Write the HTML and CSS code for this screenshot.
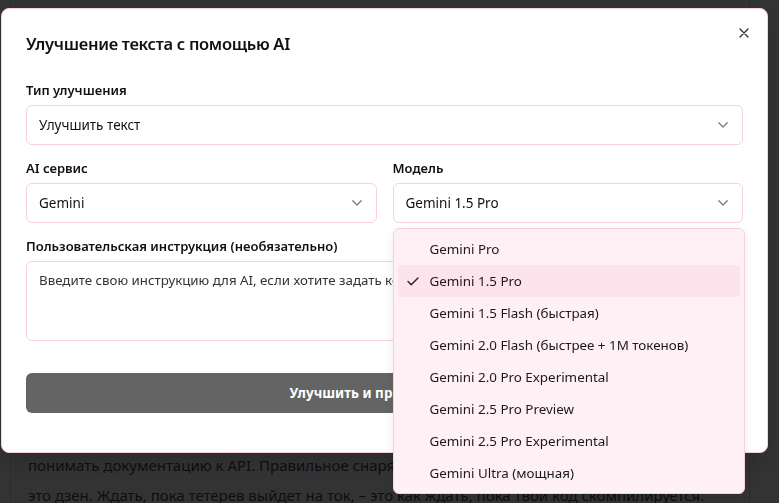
FILE: index.html
```html
<!DOCTYPE html>
<html lang="ru">
<head>
<meta charset="utf-8">
<title>Улучшение текста с помощью AI</title>
<link rel="stylesheet" href="styles.css">
</head>
<body>
<main class="page">
  <article class="article">
    <p class="text">
      Охота на тетерева – это не просто выход в лес с ружьём.<br>
      Это целое искусство, которое требует терпения,<br>
      внимательности и знания повадок птицы. Опытный<br>
      охотник знает, где искать токовище, как подойти<br>
      к нему незамеченным и когда лучше затаиться.<br>
      Точно так же и в программировании: нужно знать,<br>
      где искать ошибку, как подойти к задаче и когда<br>
      лучше сделать паузу. Хорошая охота начинается<br>
      с подготовки, и хороший код – тоже. Нужно изучить<br>
      местность так же внимательно, как программист<br>
      изучает архитектуру проекта, и знать повадки<br>
      птицы так же хорошо, как разработчик должен<br>
      знать свои инструменты и уметь читать и<br>
      понимать документацию к API. Правильное снаряжение – половина успеха.<br>
      это дзен. Ждать, пока тетерев выйдет на ток, – это как ждать, пока твой код скомпилируется.
    </p>
  </article>
</main>

<div class="overlay"></div>

<section class="modal" role="dialog" aria-labelledby="modal-title">
  <header class="modal-header">
    <h2 class="modal-title" id="modal-title">Улучшение текста с помощью AI</h2>
  </header>
  <button class="close" type="button" aria-label="Закрыть">
    <svg width="10" height="10" viewBox="0 0 10 10"><path d="M1 1L9 9M9 1L1 9" stroke="#333" stroke-width="1.4" stroke-linecap="round" fill="none"/></svg>
  </button>

  <div class="form">
    <div class="field">
      <div class="label">Тип улучшения</div>
      <div class="select">
        <span>Улучшить текст</span>
        <svg class="chev" width="10" height="6" viewBox="0 0 10 6"><path d="M0.8 0.8L5 5L9.2 0.8" stroke="#7a7a7a" stroke-width="1.3" fill="none" stroke-linecap="round" stroke-linejoin="round"/></svg>
      </div>
    </div>

    <div class="row">
      <div class="field">
        <div class="label">AI сервис</div>
        <div class="select">
          <span>Gemini</span>
          <svg class="chev" width="10" height="6" viewBox="0 0 10 6"><path d="M0.8 0.8L5 5L9.2 0.8" stroke="#7a7a7a" stroke-width="1.3" fill="none" stroke-linecap="round" stroke-linejoin="round"/></svg>
        </div>
      </div>
      <div class="field model">
        <div class="label">Модель</div>
        <div class="select">
          <span>Gemini 1.5 Pro</span>
          <svg class="chev" width="10" height="6" viewBox="0 0 10 6"><path d="M0.8 0.8L5 5L9.2 0.8" stroke="#7a7a7a" stroke-width="1.3" fill="none" stroke-linecap="round" stroke-linejoin="round"/></svg>
        </div>
        <ul class="menu" role="listbox">
          <li class="item">Gemini Pro</li>
          <li class="item selected">
            <svg class="check" width="12" height="9" viewBox="0 0 12 9"><path d="M1 4.6L4.2 7.8L11 1" stroke="#222" stroke-width="1.4" fill="none" stroke-linecap="round" stroke-linejoin="round"/></svg>
            Gemini 1.5 Pro
          </li>
          <li class="item">Gemini 1.5 Flash (быстрая)</li>
          <li class="item">Gemini 2.0 Flash (быстрее + 1M токенов)</li>
          <li class="item">Gemini 2.0 Pro Experimental</li>
          <li class="item">Gemini 2.5 Pro Preview</li>
          <li class="item">Gemini 2.5 Pro Experimental</li>
          <li class="item">Gemini Ultra (мощная)</li>
        </ul>
      </div>
    </div>

    <div class="field">
      <div class="label">Пользовательская инструкция (необязательно)</div>
      <div class="textarea">Введите свою инструкцию для AI, если хотите задать конкретные требования к тексту</div>
    </div>

    <button class="submit" type="button">
      <span>Улучшить и применить</span>
      <svg class="spark" width="16" height="16" viewBox="0 0 16 16"><path d="M8 1.5L9.4 6.6L14.5 8L9.4 9.4L8 14.5L6.6 9.4L1.5 8L6.6 6.6Z" fill="#fff"/></svg>
    </button>
  </div>
</section>
</body>
</html>
```

FILE: styles.css
```css
* { box-sizing: border-box; }

html, body {
  margin: 0;
  height: 100%;
}

body {
  font-family: "Noto Sans", "Open Sans", sans-serif;
  background: #ffffff;
  color: #111111;
  overflow: hidden;
}

/* page behind the dialog */
.page {
  height: 100%;
  padding: 0 29px 0 10px;
}

.article {
  height: 100%;
  border-left: 1px solid #e2e2e2;
  border-right: 1px solid #e2e2e2;
  padding: 60px 0 0 17px;
}

.text {
  margin: 0;
  font-size: 15px;
  line-height: 30px;
  color: #4a4a4a;
  white-space: nowrap;
}

.overlay {
  position: fixed;
  inset: 0;
  background: rgba(0, 0, 0, 0.8);
}

/* dialog */
.modal {
  position: fixed;
  left: 1px;
  top: 8px;
  width: 767px;
  background: #ffffff;
  border: 1px solid #f9cfdd;
  border-radius: 8px;
  padding: 23px 24px 39px;
  box-shadow: 0 10px 25px rgba(0, 0, 0, 0.15);
}

.modal-header {
  height: 24px;
  display: flex;
  align-items: center;
}

.modal-title {
  margin: 0;
  font-size: 16.5px;
  line-height: 24px;
  font-weight: 600;
  letter-spacing: -0.3px;
  color: #111;
}

.close {
  position: absolute;
  top: 15px;
  right: 14px;
  width: 18px;
  height: 18px;
  padding: 0;
  border: 0;
  background: transparent;
  display: flex;
  align-items: center;
  justify-content: center;
}

.form {
  margin-top: 24px;
  display: flex;
  flex-direction: column;
  gap: 13px;
}

.row {
  display: grid;
  grid-template-columns: 1fr 1fr;
  gap: 16px;
}

.field {
  display: flex;
  flex-direction: column;
  gap: 5px;
}

.model {
  position: relative;
}

.label {
  font-size: 13px;
  line-height: 20px;
  font-weight: 600;
  color: #111;
}

.select {
  height: 40px;
  border: 1px solid #f9cfdd;
  border-radius: 6px;
  padding: 0 14px 0 12px;
  display: flex;
  align-items: center;
  justify-content: space-between;
  font-size: 13.5px;
  color: #111;
}

.textarea {
  height: 80px;
  border: 1px solid #f9cfdd;
  border-radius: 6px;
  padding: 8px 12px;
  font-size: 13.3px;
  line-height: 20px;
  color: #333;
  white-space: nowrap;
  overflow: hidden;
}

.submit {
  margin-top: 19px;
  height: 40px;
  border: 0;
  border-radius: 6px;
  background: #646464;
  color: #ffffff;
  font-family: inherit;
  font-size: 13.5px;
  font-weight: 700;
  display: flex;
  align-items: center;
  justify-content: center;
  gap: 10px;
}

/* dropdown menu */
.menu {
  position: absolute;
  top: calc(100% + 5px);
  left: 0;
  width: calc(100% + 2px);
  margin: 0;
  padding: 4px;
  list-style: none;
  background: #fff0f5;
  border: 1px solid #f9cfdd;
  border-radius: 6px;
  box-shadow: 0 4px 12px rgba(0, 0, 0, 0.08);
  z-index: 2;
}

.item {
  position: relative;
  height: 32px;
  display: flex;
  align-items: center;
  padding-left: 32px;
  border-radius: 4px;
  font-size: 13.4px;
  color: #1a1a1a;
}

.item.selected {
  background: #fde3eb;
}

.check {
  position: absolute;
  left: 9px;
  top: 12px;
}
```
